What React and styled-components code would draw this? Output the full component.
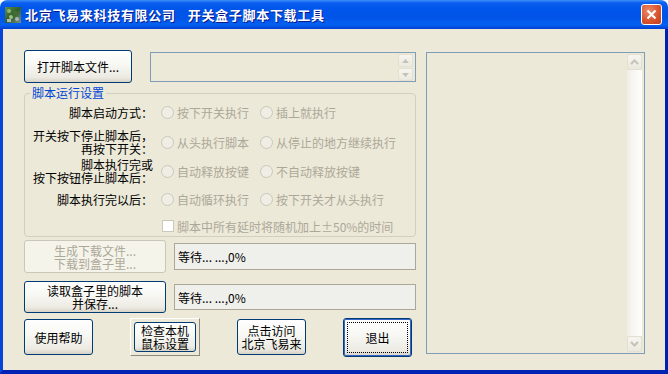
import React from "react";
import styled, { createGlobalStyle, css } from "styled-components";

const GlobalStyle = createGlobalStyle`
  html, body {
    margin: 0;
    padding: 0;
    background: #ffffff;
  }
  * {
    box-sizing: border-box;
  }
`;

const FONT = `"Noto Sans CJK SC", "Liberation Sans", sans-serif`;

const Window = styled.div`
  width: 668px;
  height: 374px;
  display: flex;
  flex-direction: column;
  font-family: ${FONT};
  font-size: 12px;
  color: #000;
`;

const TitleBar = styled.div`
  height: 29px;
  flex: none;
  display: flex;
  align-items: center;
  padding: 0 5px 0 5px;
  border-radius: 7px 7px 0 0;
  background: linear-gradient(
    180deg,
    #3d8ef8 0%,
    #0a5ff0 10%,
    #0055ea 30%,
    #0053e6 60%,
    #0560f2 85%,
    #0040d0 100%
  );
`;

const Title = styled.div`
  flex: 1;
  display: flex;
  gap: 12px;
  margin-left: 4px;
  color: #fff;
  font-weight: bold;
  font-size: 13px;
  letter-spacing: 0.7px;
  white-space: nowrap;
  text-shadow: 1px 1px 0 #0a1a8a;
`;

const CloseButton = styled.div`
  width: 21px;
  height: 21px;
  margin-right: 1px;
  border: 1px solid #fff;
  border-radius: 3px;
  background: radial-gradient(circle at 35% 30%, #ec8a6c 0%, #d9542f 55%, #c13d1c 100%);
  display: flex;
  align-items: center;
  justify-content: center;
`;

const Client = styled.div`
  flex: 1;
  display: flex;
  gap: 10px;
  padding: 21px 0 0 21px;
  background: #ece9d8;
  border-left: 3px solid #0842d8;
  border-right: 3px solid #0020b0;
  border-bottom: 4px solid #0022b4;
`;

const LeftColumn = styled.div`
  width: 392px;
  display: flex;
  flex-direction: column;
`;

const TopRow = styled.div`
  display: flex;
  align-items: flex-start;
  gap: 18px;
`;

const XPButton = styled.button`
  width: ${(p) => p.$w}px;
  height: ${(p) => p.$h}px;
  padding: 0;
  font-family: ${FONT};
  font-size: 12px;
  line-height: 13px;
  color: #000;
  text-align: center;
  white-space: pre;
  border: 1px solid #003c74;
  border-radius: 3px;
  background: linear-gradient(180deg, #ffffff 0%, #f7f7f3 45%, #eceae2 85%, #d8d3c6 100%);
  position: relative;
  cursor: default;
  ${(p) =>
    p.disabled &&
    css`
      color: #aca899;
      border-color: #c9c7ba;
      background: #f5f4ea;
    `}
  ${(p) =>
    p.$default &&
    css`
      box-shadow: inset 0 0 0 1px #3a64c8;
    `}
`;

const FocusRing = styled.span`
  position: absolute;
  inset: 3px;
  border: 1px dotted #000;
  border-radius: 1px;
  pointer-events: none;
`;

const FileBox = styled.div`
  margin-top: 2px;
  width: 266px;
  height: 30px;
  border: 1px solid #7f9db9;
  background: #ece9d8;
  display: flex;
  justify-content: flex-end;
  padding: 1px 2px 0 0;
`;

const Spinner = styled.div`
  display: flex;
  flex-direction: column;
  gap: 1px;
`;

const ArrowBtn = styled.div`
  width: 15px;
  height: ${(p) => p.$h || 13}px;
  border: 1px solid #e3e0d2;
  border-radius: 2px;
  background: linear-gradient(180deg, #f6f5ef, #ebe9df);
  display: flex;
  align-items: center;
  justify-content: center;
`;

const Group = styled.div`
  position: relative;
  margin-top: 10px;
  height: 144px;
  border: 1px solid #d0d0bf;
  border-radius: 4px;
  padding-top: 10px;
`;

const Legend = styled.span`
  position: absolute;
  left: 5px;
  top: -8px;
  padding: 0 2px;
  line-height: 14px;
  color: #0046d5;
  background: #ece9d8;
`;

const Row = styled.div`
  display: flex;
  align-items: center;
  height: ${(p) => p.$h}px;
  margin-top: ${(p) => p.$mt || 0}px;
`;

const RowLabel = styled.div`
  width: 128px;
  flex: none;
  text-align: right;
  white-space: pre;
  line-height: 13px;
  margin-right: 8px;
`;

const Option = styled.div`
  width: ${(p) => (p.$auto ? "auto" : "99px")};
  flex: none;
  display: flex;
  align-items: center;
  gap: 3px;
  color: #aca899;
  white-space: nowrap;
`;

const Radio = styled.span`
  width: 13px;
  height: 13px;
  flex: none;
  border-radius: 50%;
  border: 1px solid #cac8bb;
  background: #efede4;
`;

const Check = styled.span`
  width: 12px;
  height: 12px;
  flex: none;
  margin-left: 1px;
  border: 1px solid #cac8bb;
  background: #fff;
`;

const ActionRow = styled.div`
  display: flex;
  align-items: center;
  gap: 8px;
  margin-top: ${(p) => p.$mt}px;
`;

const StatusBox = styled.div`
  width: 242px;
  height: ${(p) => p.$h}px;
  border: 1px solid #aca899;
  background: #efefec;
  display: flex;
  align-items: center;
  padding-left: 3px;
  white-space: pre;
`;

const FooterRow = styled.div`
  display: flex;
  align-items: center;
  gap: 37px;
  height: 40px;
  margin-top: 4px;
`;

const RaisedFrame = styled.div`
  width: 70px;
  height: 38px;
  padding: 3px;
  border-top: 1px solid #fff;
  border-left: 1px solid #fff;
  border-right: 1px solid #8c8a7e;
  border-bottom: 1px solid #8c8a7e;
  display: flex;
  align-items: center;
  justify-content: center;
`;

const ListBox = styled.div`
  margin-top: 2px;
  width: 219px;
  height: 302px;
  border: 1px solid #7f9db9;
  background: #ece9d8;
  display: flex;
  justify-content: flex-end;
  padding: 1px 2px 1px 0;
`;

const ScrollBar = styled.div`
  width: 15px;
  display: flex;
  flex-direction: column;
`;

const Track = styled.div`
  flex: 1;
  background: linear-gradient(90deg, #eeede5 0%, #f7f6f1 40%, #fefefd 100%);
`;

const Chevron = ({ up, size = 9 }) => (
  <svg width={size} height={size - 3} viewBox="0 0 9 6">
    <polyline
      points={up ? "1,5 4.5,1.5 8,5" : "1,1 4.5,4.5 8,1"}
      fill="none"
      stroke="#c6c3b6"
      strokeWidth="2"
    />
  </svg>
);

const Tri = ({ up }) => (
  <svg width="7" height="4" viewBox="0 0 7 4">
    <polygon points={up ? "0,4 3.5,0 7,4" : "0,0 3.5,4 7,0"} fill="#c6c3b6" />
  </svg>
);

const AppIcon = () => (
  <svg width="16" height="16" viewBox="0 0 16 16">
    <defs>
      <linearGradient id="leaf" x1="0" y1="0" x2="1" y2="1">
        <stop offset="0" stopColor="#5f8f4c" />
        <stop offset="0.5" stopColor="#2f5e2c" />
        <stop offset="1" stopColor="#7a8f86" />
      </linearGradient>
    </defs>
    <rect x="0" y="0" width="16" height="16" fill="url(#leaf)" />
    <circle cx="4" cy="4" r="2" fill="#8fb56f" />
    <circle cx="10" cy="6" r="2.5" fill="#3d6e33" />
    <circle cx="6" cy="10" r="2" fill="#9cc07e" />
    <circle cx="12" cy="12" r="2" fill="#a7b5b4" />
    <rect x="2" y="12" width="4" height="3" fill="#b0b9b8" />
  </svg>
);

const rows = [
  { label: "脚本启动方式：", opts: ["按下开关执行", "插上就执行"], h: 16, mt: 0 },
  { label: "开关按下停止脚本后，\n再按下开关：", opts: ["从头执行脚本", "从停止的地方继续执行"], h: 26, mt: 9 },
  { label: "脚本执行完或\n按下按钮停止脚本后：", opts: ["自动释放按键", "不自动释放按键"], h: 26, mt: 3 },
  { label: "脚本执行完以后：", opts: ["自动循环执行", "按下开关才从头执行"], h: 16, mt: 7 },
];

export default function App() {
  return (
    <>
      <GlobalStyle />
      <Window>
        <TitleBar>
          <AppIcon />
          <Title>
            <span>北京飞易来科技有限公司</span>
            <span>开关盒子脚本下载工具</span>
          </Title>
          <CloseButton>
            <svg width="11" height="11" viewBox="0 0 11 11">
              <path d="M1.5 1.5 L9.5 9.5 M9.5 1.5 L1.5 9.5" stroke="#fff" strokeWidth="2.2" />
            </svg>
          </CloseButton>
        </TitleBar>
        <Client>
          <LeftColumn>
            <TopRow>
              <XPButton $w={108} $h={33}>打开脚本文件...</XPButton>
              <FileBox>
                <Spinner>
                  <ArrowBtn>
                    <Tri up />
                  </ArrowBtn>
                  <ArrowBtn>
                    <Tri />
                  </ArrowBtn>
                </Spinner>
              </FileBox>
            </TopRow>

            <Group>
              <Legend>脚本运行设置</Legend>
              {rows.map((r) => (
                <Row key={r.label} $h={r.h} $mt={r.mt}>
                  <RowLabel>{r.label}</RowLabel>
                  {r.opts.map((o) => (
                    <Option key={o}>
                      <Radio />
                      {o}
                    </Option>
                  ))}
                </Row>
              ))}
              <Row $h={16} $mt={11}>
                <RowLabel />
                <Option $auto>
                  <Check />
                  脚本中所有延时将随机加上±50%的时间
                </Option>
              </Row>
            </Group>

            <ActionRow $mt={3}>
              <XPButton $w={142} $h={33} disabled>
                {"生成下载文件...\n下载到盒子里..."}
              </XPButton>
              <StatusBox $h={27}>等待... ...,0%</StatusBox>
            </ActionRow>

            <ActionRow $mt={8}>
              <XPButton $w={142} $h={32}>
                {"读取盒子里的脚本\n并保存..."}
              </XPButton>
              <StatusBox $h={26}>等待... ...,0%</StatusBox>
            </ActionRow>

            <FooterRow>
              <XPButton $w={69} $h={36}>使用帮助</XPButton>
              <RaisedFrame>
                <XPButton $w={63} $h={30}>
                  {"检查本机\n鼠标设置"}
                </XPButton>
              </RaisedFrame>
              <XPButton $w={69} $h={36}>
                {"点击访问\n北京飞易来"}
              </XPButton>
              <XPButton $w={69} $h={39} $default>
                <FocusRing />
                退出
              </XPButton>
            </FooterRow>
          </LeftColumn>

          <ListBox>
            <ScrollBar>
              <ArrowBtn $h={16}>
                <Chevron up />
              </ArrowBtn>
              <Track />
              <ArrowBtn $h={16}>
                <Chevron />
              </ArrowBtn>
            </ScrollBar>
          </ListBox>
        </Client>
      </Window>
    </>
  );
}
